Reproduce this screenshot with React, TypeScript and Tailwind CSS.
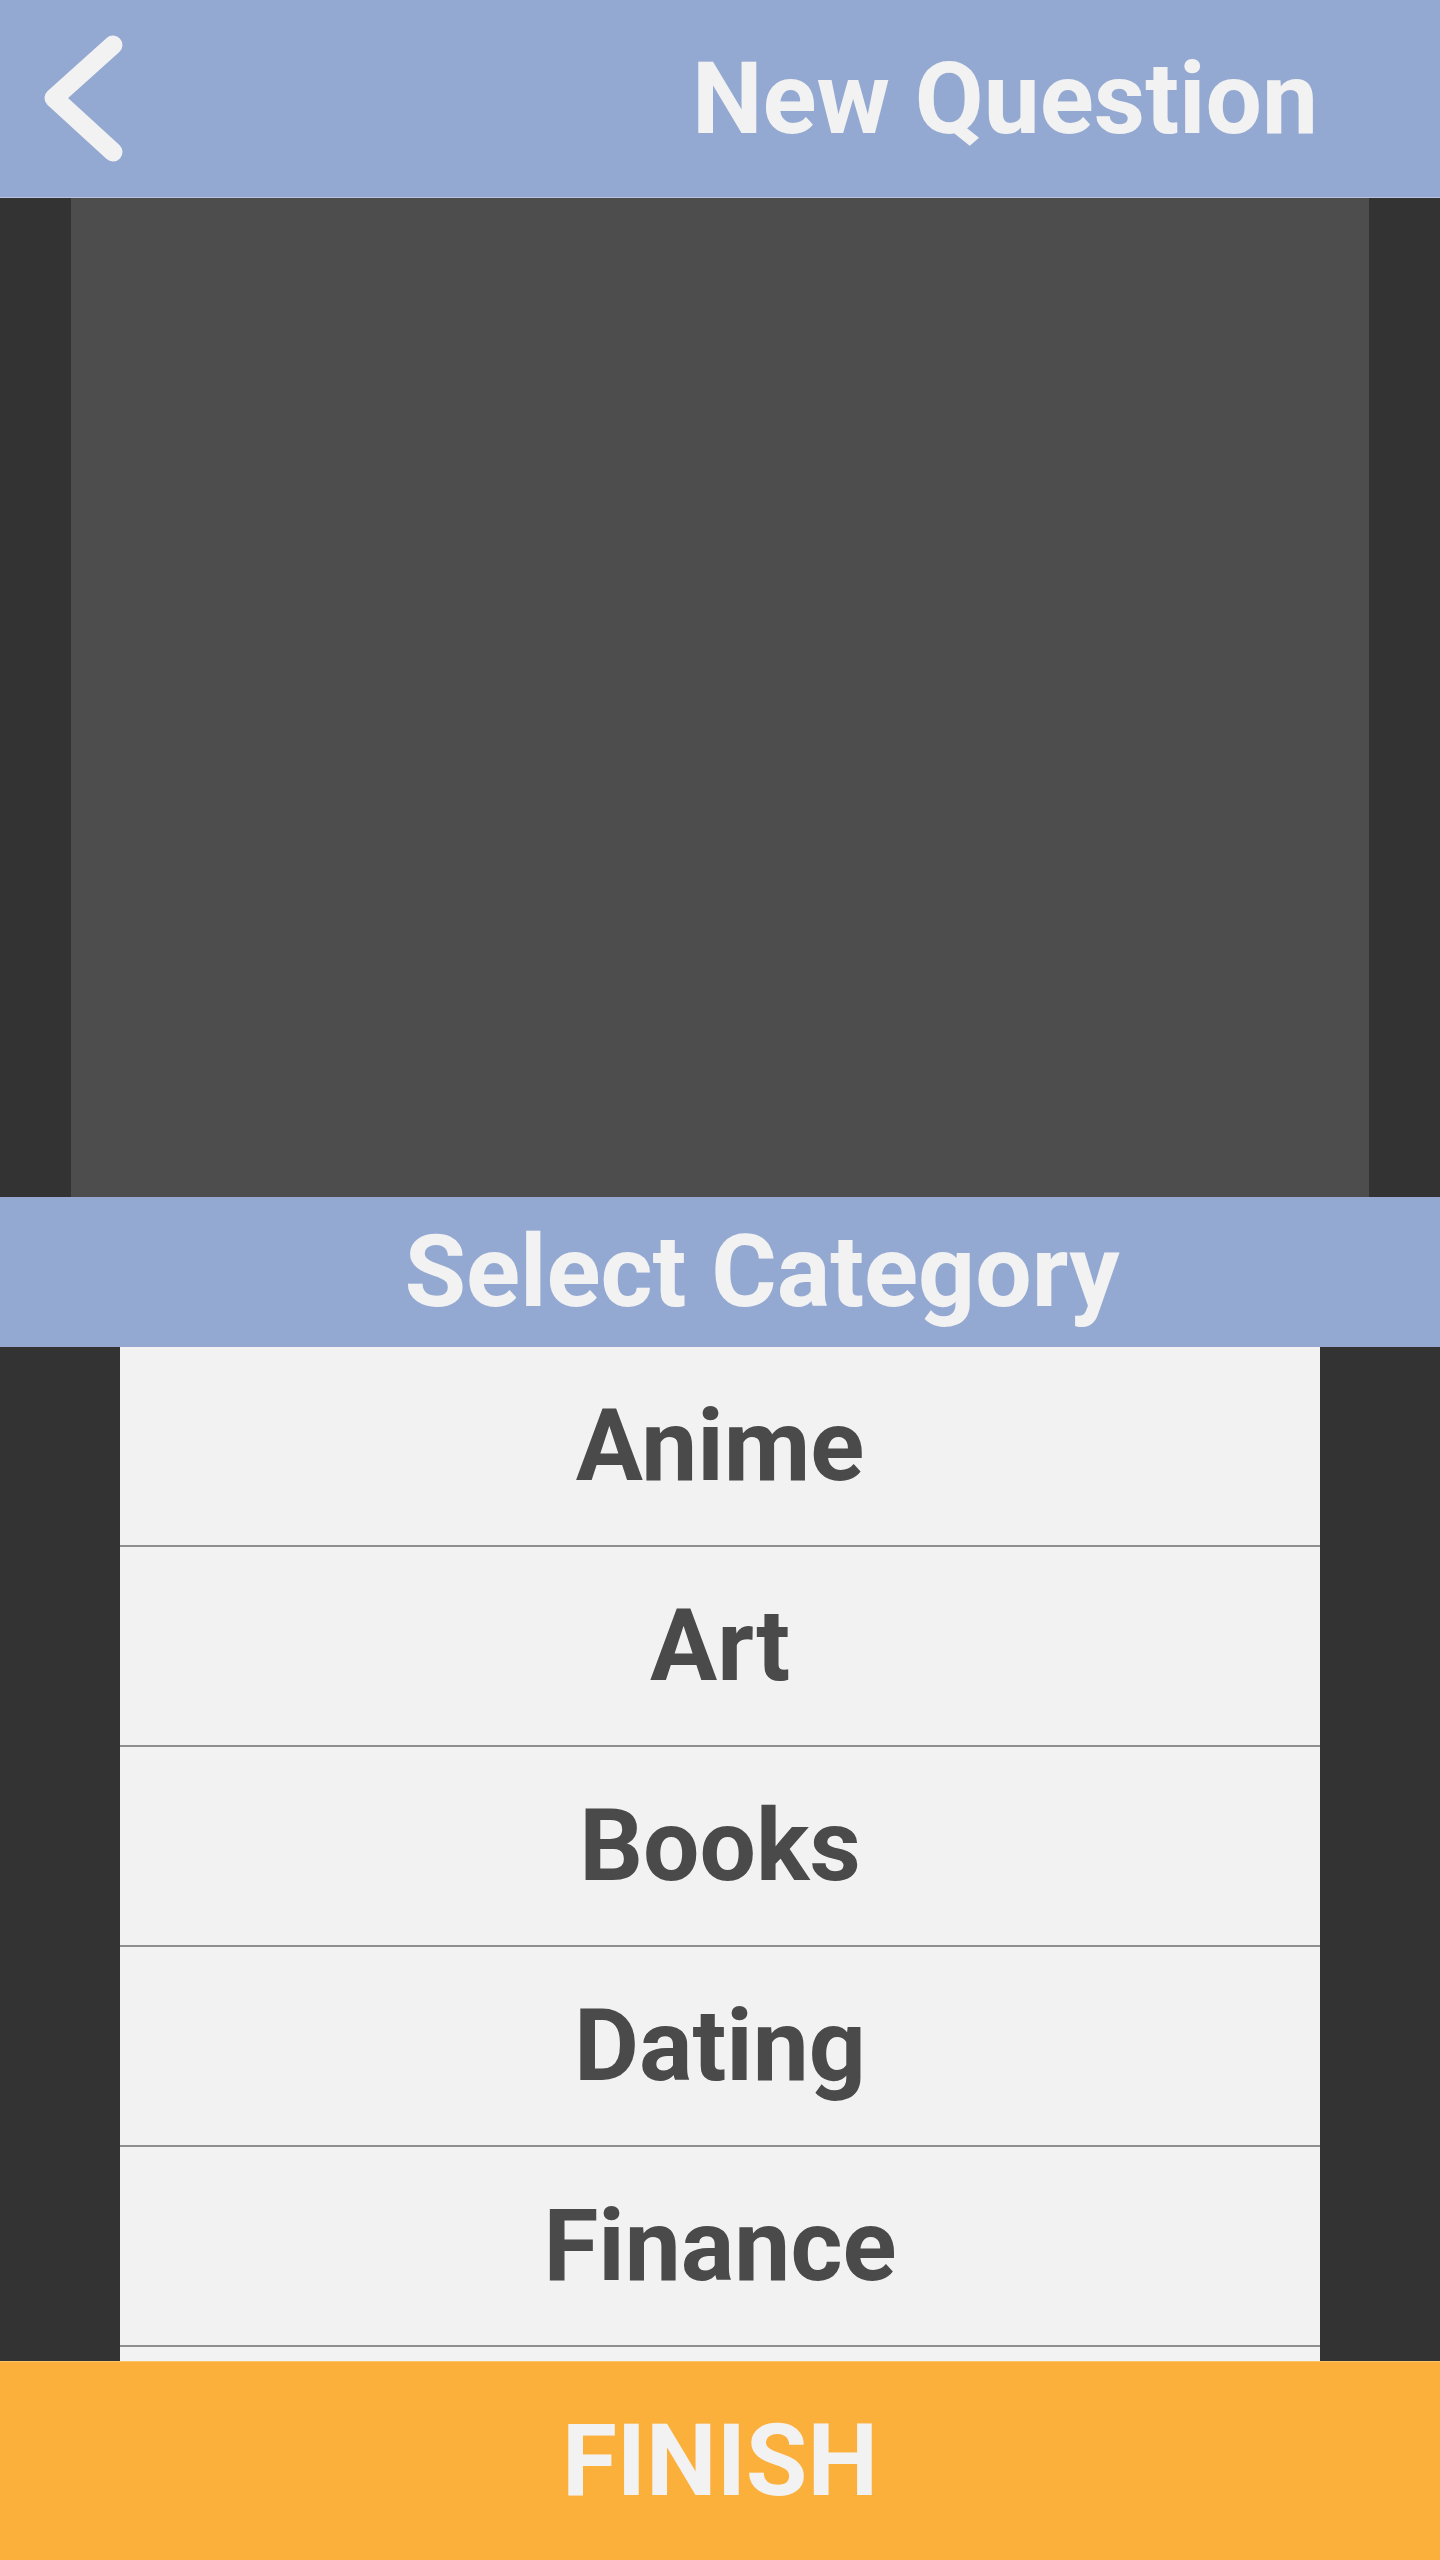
import React from 'react'

const categories = ['Anime', 'Art', 'Books', 'Dating', 'Finance']

function BackIcon() {
  return (
    <svg width="140" height="197" viewBox="0 0 140 197" className="block">
      <polyline
        points="113,45 54,98 113,152"
        fill="none"
        stroke="#f2f2f2"
        strokeWidth="19"
        strokeLinecap="round"
        strokeLinejoin="round"
      />
    </svg>
  )
}

export default function App() {
  return (
    <div
      className="w-[1440px] h-[2560px] flex flex-col overflow-hidden bg-[#333333]"
      style={{ fontFamily: 'Roboto, "Noto Sans", sans-serif' }}
    >
      {/* header */}
      <div className="h-[198px] shrink-0 flex items-center bg-[#94a9d2] border-b border-[#b9c4dc]">
        <button className="w-[140px] h-[197px] flex items-start">
          <BackIcon />
        </button>
        <div className="flex-1 flex justify-end pr-[122px]">
          <h1 className="text-[100px] leading-none font-bold text-[#f2f2f2]">New Question</h1>
        </div>
      </div>

      {/* preview area */}
      <div className="h-[999px] shrink-0 flex pl-[71px] pr-[71px]">
        <div className="flex-1 bg-[#4d4d4d]" />
      </div>

      {/* select category bar */}
      <div className="h-[150px] shrink-0 flex items-center justify-center bg-[#94a9d2] pl-[84px]">
        <span className="text-[100px] leading-none font-bold text-[#f2f2f2]">Select Category</span>
      </div>

      <div className="flex-1 min-h-0 flex justify-center overflow-hidden">
        <ul className="w-[1200px] bg-[#f2f2f2] overflow-hidden">
          {categories.map((c) => (
            <li
              key={c}
              className="h-[200px] flex items-center justify-center border-b-2 border-[#8f8f8f] text-[100px] leading-none font-bold text-[#4a4a4a]"
            >
              {c}
            </li>
          ))}
          <li className="h-[200px]" />
        </ul>
      </div>

      {/* finish */}
      <button className="h-[199px] shrink-0 flex items-center justify-center bg-[#fbb03b] border-t border-[#fcc466]">
        <span className="text-[100px] leading-none font-bold text-[#f2f2f2]">FINISH</span>
      </button>
    </div>
  )
}
